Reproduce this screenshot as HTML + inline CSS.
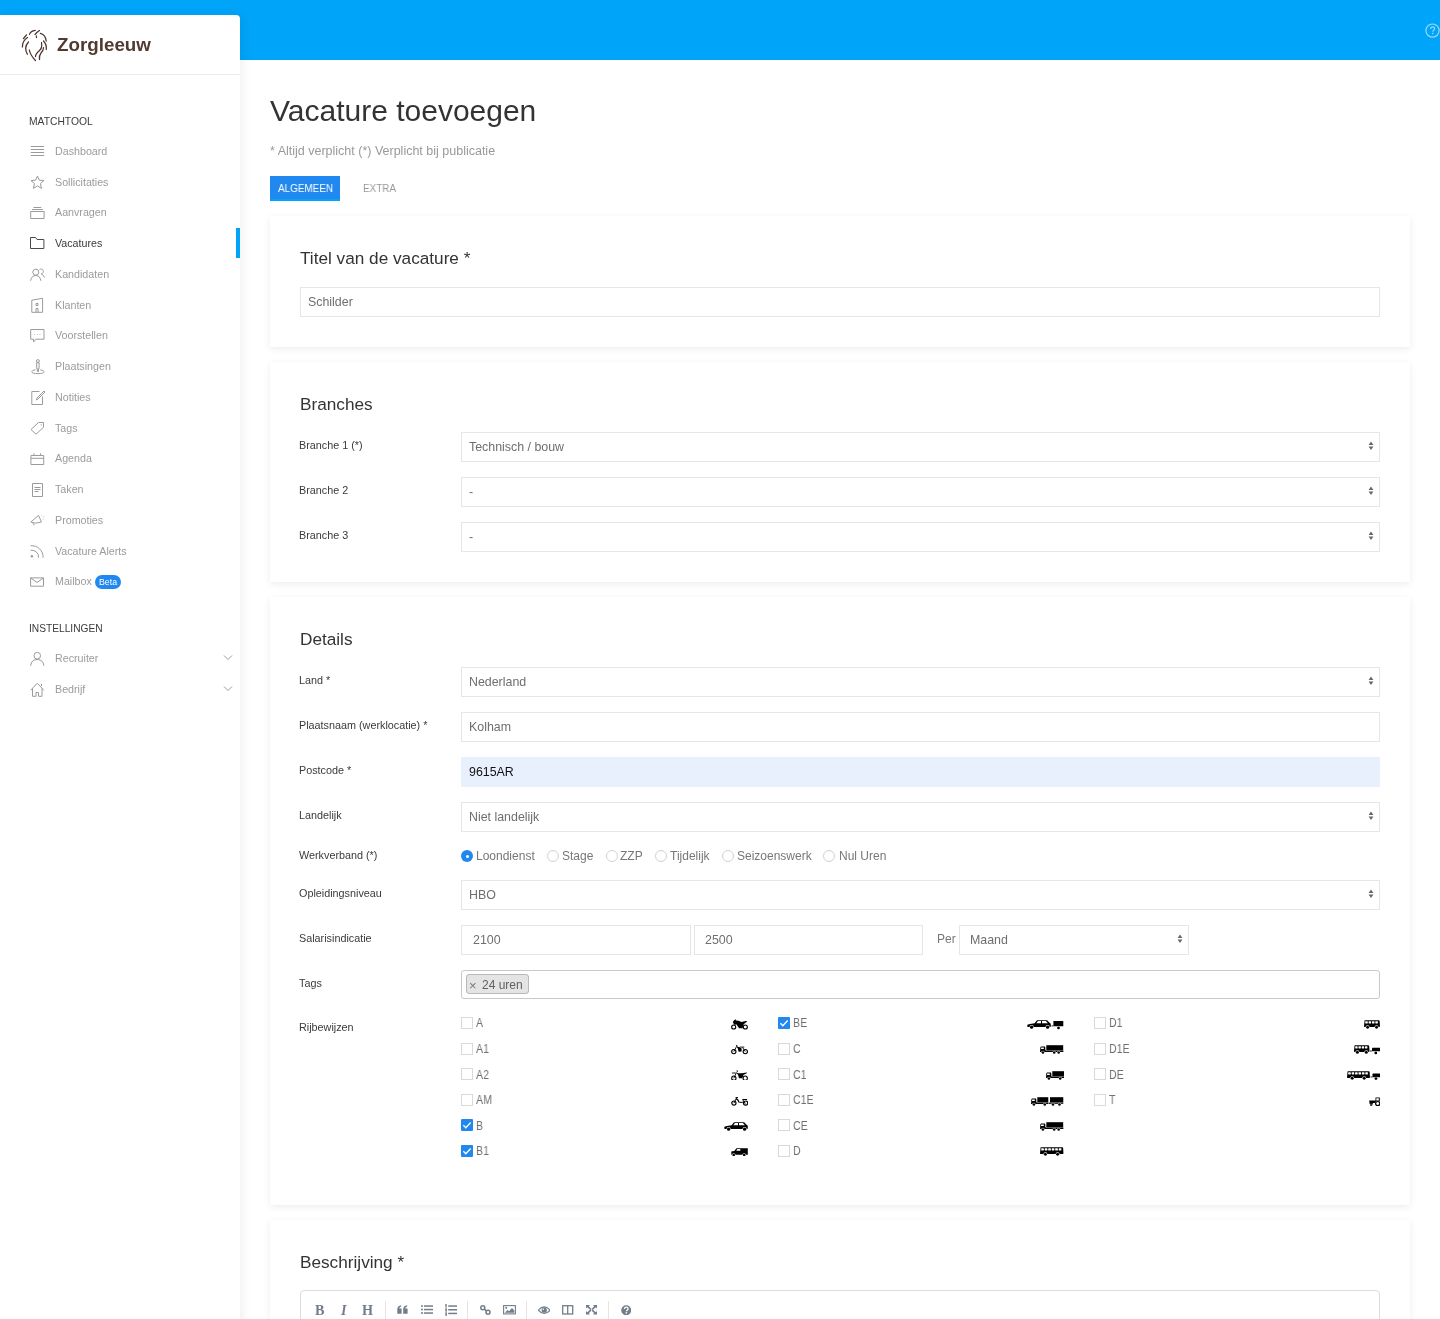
<!DOCTYPE html><html><head><meta charset="utf-8"><title>Vacature toevoegen</title><style>
*{box-sizing:border-box;margin:0;padding:0}
html,body{width:1440px;height:1319px;overflow:hidden;background:#fff;font-family:"Liberation Sans",sans-serif;position:relative}
.t{position:absolute;white-space:nowrap;will-change:transform}
.a{position:absolute}
#topbar{position:absolute;left:0;top:0;width:1440px;height:60px;background:#00a4f9}
#sidebar{position:absolute;left:0;top:15px;width:240px;height:1320px;background:#fff;border-top-right-radius:4px;box-shadow:3px 0 10px rgba(0,0,0,0.06)}
.card{position:absolute;left:270px;width:1140px;background:#fff;box-shadow:0 2px 7px rgba(0,0,0,0.075)}
.inp{position:absolute;background:#fff;border:1px solid #e6e6e6}
.sico{position:absolute;left:30px;overflow:visible}
.sico.act *{stroke:#4a4a4a}
.sico *{fill:none;stroke:#9b9b9b;stroke-width:1}
.cb{position:absolute;width:12px;height:12px;border:1px solid #d9d9d9;background:#fff}
.cbc{position:absolute;width:12px;height:12px;background:#2188f0;border-radius:1px}
.rd{position:absolute;width:12px;height:12px;border:1px solid #d2d2d2;border-radius:50%;background:#fff}
</style></head><body>
<div id="topbar"></div>
<svg class="a" style="left:1418px;top:16px" width="30" height="30" viewBox="0 0 30 30"><circle cx="14.5" cy="14.6" r="6.6" fill="none" stroke="rgba(255,255,255,0.6)" stroke-width="1.2"/><path d="M12.6 12.9c0-1.2.9-2 2-2s2 .8 2 1.9c0 1.4-1.9 1.5-1.9 3" fill="none" stroke="rgba(255,255,255,0.6)" stroke-width="1.1"/><circle cx="14.7" cy="17.6" r=".75" fill="rgba(255,255,255,0.65)"/></svg>
<div id="sidebar"></div>
<svg class="a" style="left:18px;top:26px" width="34" height="38" viewBox="0 0 34 38">
<g fill="none" stroke="#4e342e" stroke-width="1.25" stroke-linecap="round">
<path d="M11.5 8.4Q12.5 5 17.3 4.3"/>
<path d="M17 8.5Q19 6 21.5 4.5"/>
<path d="M18.4 10L18.5 11.5"/>
<path d="M22.3 7.3Q27.5 8.5 28.2 15"/>
<path d="M5.5 12.5L8.5 8.8"/>
<path d="M9.5 11.5Q4.2 15 4.4 21"/>
<path d="M10.5 16Q5.5 21.5 9.4 28.3"/>
<path d="M11.3 24Q12 28.5 17.4 34.5"/>
<path d="M23.5 16.5Q24.5 22 21.5 24.5Q17.5 28 17.5 30.5"/>
<path d="M25.5 15Q28.8 18.5 28.3 23.5"/>
<path d="M25.5 21.7Q25.3 25 23 27Q21 29.5 21.5 33.5"/>
</g></svg>
<div class="t" style="left:57px;top:36.09px;font-size:18.8px;line-height:18.8px;color:#513a2f;font-weight:700;">Zorgleeuw</div>
<div class="a" style="left:0;top:74px;width:240px;height:1px;background:#e9e9e9"></div>
<div class="t" style="left:29px;top:116.88px;font-size:10.3px;line-height:10.3px;color:#3c3c3c;font-weight:400;">MATCHTOOL</div>
<svg class="sico" style="top:141px" width="16" height="19" viewBox="0 0 16 19"><path d="M0.7 5.5H14.1M0.7 8.5H14.1M0.7 11.5H14.1M0.7 14.5H14.1"/></svg>
<div class="t" style="left:55px;top:145.94px;font-size:10.7px;line-height:10.7px;color:#9b9b9b;font-weight:400;">Dashboard</div>
<svg class="sico" style="top:172px" width="16" height="19" viewBox="0 0 16 19"><path d="M7.45 4.1L9.3 8.2L13.9 8.6L10.4 11.5L11.5 16.4L7.45 13.9L3.4 16.4L4.5 11.5L1 8.6L5.6 8.2Z"/></svg>
<div class="t" style="left:55px;top:176.69px;font-size:10.7px;line-height:10.7px;color:#9b9b9b;font-weight:400;">Sollicitaties</div>
<svg class="sico" style="top:203px" width="16" height="19" viewBox="0 0 16 19"><path d="M0.7 8.5H14.1V15.5H0.7ZM2 6.5H12.8M3.5 4.5H11.3"/></svg>
<div class="t" style="left:55px;top:207.44px;font-size:10.7px;line-height:10.7px;color:#9b9b9b;font-weight:400;">Aanvragen</div>
<svg class="sico act" style="top:233px" width="16" height="19" viewBox="0 0 16 19"><path d="M0.5 4.5H5.5L7 6.5H13.9V15.5H0.5Z"/></svg>
<div class="t" style="left:55px;top:238.19px;font-size:10.7px;line-height:10.7px;color:#3a3a3a;font-weight:400;">Vacatures</div>
<svg class="sico" style="top:264px" width="16" height="19" viewBox="0 0 16 19"><path d="M0.6 16.8Q1.5 11.5 5.8 11.5Q10 11.5 10.9 16.8M5.8 11.2A3 3 0 1 0 5.8 5.2A3 3 0 0 0 5.8 11.2M9.5 5.5A2.4 2.4 0 1 1 11.2 9.8Q13.6 10.8 14.6 13.5"/></svg>
<div class="t" style="left:55px;top:268.94px;font-size:10.7px;line-height:10.7px;color:#9b9b9b;font-weight:400;">Kandidaten</div>
<svg class="sico" style="top:295px" width="16" height="19" viewBox="0 0 16 19"><path d="M1.8 17.3V5.2L12.6 3.3V17.3ZM6 8.5H8V10.5H6ZM6 17.3V13.5H8V17.3"/></svg>
<div class="t" style="left:55px;top:299.69px;font-size:10.7px;line-height:10.7px;color:#9b9b9b;font-weight:400;">Klanten</div>
<svg class="sico" style="top:326px" width="16" height="19" viewBox="0 0 16 19"><path d="M0.7 3.5H14V13.2H6L3.5 16V13.2H0.7Z"/><path d="M4.5 8.5h.6M7.1 8.5h.6M9.7 8.5h.6" stroke-width="1.2"/></svg>
<div class="t" style="left:55px;top:330.44px;font-size:10.7px;line-height:10.7px;color:#9b9b9b;font-weight:400;">Voorstellen</div>
<svg class="sico" style="top:356px" width="16" height="19" viewBox="0 0 16 19"><path d="M6.7 6.7H9.1V12.5H8.5V15.5H7.3V12.5H6.7ZM7.9 3.6A1.45 1.45 0 1 1 7.9 6.5A1.45 1.45 0 0 1 7.9 3.6ZM5.5 13.8Q1.8 14.3 1.8 15.7Q1.8 17.6 7.9 17.6Q14 17.6 14 15.7Q14 14.3 10.3 13.8"/></svg>
<div class="t" style="left:55px;top:361.19px;font-size:10.7px;line-height:10.7px;color:#9b9b9b;font-weight:400;">Plaatsingen</div>
<svg class="sico" style="top:387px" width="16" height="19" viewBox="0 0 16 19"><path d="M9.5 4.5H1.8V17.5H12.5V9.5"/><path d="M6.5 13L7 11L14 4L15 5L8 12Z"/></svg>
<div class="t" style="left:55px;top:391.94px;font-size:10.7px;line-height:10.7px;color:#9b9b9b;font-weight:400;">Notities</div>
<svg class="sico" style="top:418px" width="16" height="19" viewBox="0 0 16 19"><path d="M1 11.5L8.5 4.5H13.5V9.3L6 16.2Z"/><circle cx="11.2" cy="6.9" r=".6" style="fill:#9b9b9b;stroke:none"/></svg>
<div class="t" style="left:55px;top:422.69px;font-size:10.7px;line-height:10.7px;color:#9b9b9b;font-weight:400;">Tags</div>
<svg class="sico" style="top:449px" width="16" height="19" viewBox="0 0 16 19"><path d="M0.9 6.5H13.7V15.5H0.9ZM0.9 9.3H13.7M4 4.3V6.5M10.6 4.3V6.5"/></svg>
<div class="t" style="left:55px;top:453.44px;font-size:10.7px;line-height:10.7px;color:#9b9b9b;font-weight:400;">Agenda</div>
<svg class="sico" style="top:479px" width="16" height="19" viewBox="0 0 16 19"><path d="M2.5 4.5H12.5V17.5H2.5ZM4.5 8.5H10.5M4.5 10.5H10.5M4.5 12.5H8.5"/></svg>
<div class="t" style="left:55px;top:484.19px;font-size:10.7px;line-height:10.7px;color:#9b9b9b;font-weight:400;">Taken</div>
<svg class="sico" style="top:510px" width="16" height="19" viewBox="0 0 16 19"><path d="M0.8 12L8.5 5.4L11.5 12L5.5 13.2Z"/><path d="M3 13.2L4.2 15.3" stroke-width="1.6"/><path d="M11.6 5.2l.5.4M13.7 6.6l.6.2M13.2 8.8l.1.6" stroke-width="1.1"/></svg>
<div class="t" style="left:55px;top:514.94px;font-size:10.7px;line-height:10.7px;color:#9b9b9b;font-weight:400;">Promoties</div>
<svg class="sico" style="top:541px" width="16" height="19" viewBox="0 0 16 19"><path d="M0.6 9.3A6.8 6.8 0 0 1 8.6 16.5M0.6 4.8A11.3 11.3 0 0 1 13.1 16.7"/><circle cx="1.9" cy="15.3" r="1.2" style="fill:#9b9b9b;stroke:none"/></svg>
<div class="t" style="left:55px;top:545.69px;font-size:10.7px;line-height:10.7px;color:#9b9b9b;font-weight:400;">Vacature Alerts</div>
<svg class="sico" style="top:572px" width="16" height="19" viewBox="0 0 16 19"><path d="M0.6 5.9H13.5V14.2H0.6ZM0.6 5.9L7 10.5L13.5 5.9"/></svg>
<div class="t" style="left:55px;top:576.44px;font-size:10.7px;line-height:10.7px;color:#9b9b9b;font-weight:400;">Mailbox</div>
<div class="a" style="left:236px;top:228px;width:4px;height:30px;background:#00a4f9"></div>
<div class="a" style="left:95px;top:575px;width:26px;height:14px;border-radius:7px;background:#2188f0"></div>
<div class="t" style="left:99px;top:577.95px;font-size:8.8px;line-height:8.8px;color:#fff;font-weight:400;">Beta</div>
<div class="t" style="left:29px;top:623.97px;font-size:10.2px;line-height:10.2px;color:#3c3c3c;font-weight:400;">INSTELLINGEN</div>
<svg class="sico" style="top:648px" width="16" height="19" viewBox="0 0 16 19"><path d="M0.6 17.8Q1.3 11.5 7.25 11.5Q13.2 11.5 13.9 17.8M7.25 11A3.3 3.3 0 1 0 7.25 4.4A3.3 3.3 0 0 0 7.25 11"/></svg>
<div class="t" style="left:55px;top:653.34px;font-size:10.7px;line-height:10.7px;color:#9b9b9b;font-weight:400;">Recruiter</div>
<svg class="a" style="left:223px;top:655.40px" width="10" height="6" viewBox="0 0 10 6"><path d="M1 .5l4 4 4-4" fill="none" stroke="#9b9b9b" stroke-width="1"/></svg>
<svg class="sico" style="top:679px" width="16" height="19" viewBox="0 0 16 19"><path d="M0.6 11.3L7.25 4.2L13.9 11.3M2.5 9.5V17.3H6V13.5H8.5V17.3H12V9.5M11.5 4.8V7"/></svg>
<div class="t" style="left:55px;top:684.09px;font-size:10.7px;line-height:10.7px;color:#9b9b9b;font-weight:400;">Bedrijf</div>
<svg class="a" style="left:223px;top:686.15px" width="10" height="6" viewBox="0 0 10 6"><path d="M1 .5l4 4 4-4" fill="none" stroke="#9b9b9b" stroke-width="1"/></svg>
<div class="t" style="left:270px;top:96.11px;font-size:30px;line-height:30px;color:#333;font-weight:400;">Vacature toevoegen</div>
<div class="t" style="left:270px;top:145.22px;font-size:12.5px;line-height:12.5px;color:#999;font-weight:400;">* Altijd verplicht (*) Verplicht bij publicatie</div>
<div class="a" style="left:270px;top:175.5px;width:70px;height:25.5px;background:#2188f0;border-bottom:2px solid #00a4f9"></div>
<div class="t" style="left:278px;top:182.63px;font-size:10.6px;line-height:10.6px;color:#fff;font-weight:400;transform:scaleX(0.935);transform-origin:0 0">ALGEMEEN</div>
<div class="t" style="left:363px;top:183.23px;font-size:10.6px;line-height:10.6px;color:#999;font-weight:400;transform:scaleX(0.935);transform-origin:0 0">EXTRA</div>
<div class="card" style="top:216px;height:131px"></div>
<div class="card" style="top:362px;height:220px"></div>
<div class="card" style="top:597px;height:608px"></div>
<div class="card" style="top:1220px;height:200px"></div>
<div class="t" style="left:300px;top:250.44px;font-size:17.2px;line-height:17.2px;color:#333;font-weight:400;">Titel van de vacature *</div>
<div class="inp" style="left:300px;top:287px;width:1080px;height:30px;background:#fff;border-color:#e6e6e6;border-radius:0px"></div>
<div class="t" style="left:308px;top:296.30px;font-size:12.4px;line-height:12.4px;color:#6e6e6e;font-weight:400;">Schilder</div>
<div class="t" style="left:300px;top:395.84px;font-size:17.2px;line-height:17.2px;color:#333;font-weight:400;">Branches</div>
<div class="t" style="left:299px;top:440.36px;font-size:10.8px;line-height:10.8px;color:#3a3a3a;font-weight:400;">Branche 1 (*)</div>
<div class="inp" style="left:461px;top:432px;width:919px;height:30px;background:#fff;border-color:#e6e6e6;border-radius:0px"></div>
<div class="t" style="left:469px;top:441.30px;font-size:12.4px;line-height:12.4px;color:#6e6e6e;font-weight:400;">Technisch / bouw</div>
<svg class="a" style="left:1367.5px;top:441px" width="6" height="10" viewBox="0 0 6 10"><path d="M3 .5L5.4 4H.6zM.6 5.4h4.8L3 9z" fill="#666"/></svg>
<div class="t" style="left:299px;top:485.36px;font-size:10.8px;line-height:10.8px;color:#3a3a3a;font-weight:400;">Branche 2</div>
<div class="inp" style="left:461px;top:477px;width:919px;height:30px;background:#fff;border-color:#e6e6e6;border-radius:0px"></div>
<div class="t" style="left:469px;top:486.30px;font-size:12.4px;line-height:12.4px;color:#6e6e6e;font-weight:400;">-</div>
<svg class="a" style="left:1367.5px;top:486px" width="6" height="10" viewBox="0 0 6 10"><path d="M3 .5L5.4 4H.6zM.6 5.4h4.8L3 9z" fill="#666"/></svg>
<div class="t" style="left:299px;top:530.36px;font-size:10.8px;line-height:10.8px;color:#3a3a3a;font-weight:400;">Branche 3</div>
<div class="inp" style="left:461px;top:522px;width:919px;height:30px;background:#fff;border-color:#e6e6e6;border-radius:0px"></div>
<div class="t" style="left:469px;top:531.30px;font-size:12.4px;line-height:12.4px;color:#6e6e6e;font-weight:400;">-</div>
<svg class="a" style="left:1367.5px;top:531px" width="6" height="10" viewBox="0 0 6 10"><path d="M3 .5L5.4 4H.6zM.6 5.4h4.8L3 9z" fill="#666"/></svg>
<div class="t" style="left:300px;top:631.14px;font-size:17.2px;line-height:17.2px;color:#333;font-weight:400;">Details</div>
<div class="t" style="left:299px;top:675.06px;font-size:10.8px;line-height:10.8px;color:#3a3a3a;font-weight:400;">Land *</div>
<div class="inp" style="left:461px;top:667px;width:919px;height:30px;background:#fff;border-color:#e6e6e6;border-radius:0px"></div>
<div class="t" style="left:469px;top:676.30px;font-size:12.4px;line-height:12.4px;color:#6e6e6e;font-weight:400;">Nederland</div>
<svg class="a" style="left:1367.5px;top:676px" width="6" height="10" viewBox="0 0 6 10"><path d="M3 .5L5.4 4H.6zM.6 5.4h4.8L3 9z" fill="#666"/></svg>
<div class="t" style="left:299px;top:720.06px;font-size:10.8px;line-height:10.8px;color:#3a3a3a;font-weight:400;">Plaatsnaam (werklocatie) *</div>
<div class="inp" style="left:461px;top:712px;width:919px;height:30px;background:#fff;border-color:#e6e6e6;border-radius:0px"></div>
<div class="t" style="left:469px;top:721.30px;font-size:12.4px;line-height:12.4px;color:#6e6e6e;font-weight:400;">Kolham</div>
<div class="t" style="left:299px;top:765.06px;font-size:10.8px;line-height:10.8px;color:#3a3a3a;font-weight:400;">Postcode *</div>
<div class="inp" style="left:461px;top:757px;width:919px;height:30px;background:#e8f0fe;border-color:#e8f0fe;border-radius:0px"></div>
<div class="t" style="left:469px;top:766.30px;font-size:12.4px;line-height:12.4px;color:#111;font-weight:400;">9615AR</div>
<div class="t" style="left:299px;top:810.06px;font-size:10.8px;line-height:10.8px;color:#3a3a3a;font-weight:400;">Landelijk</div>
<div class="inp" style="left:461px;top:802px;width:919px;height:30px;background:#fff;border-color:#e6e6e6;border-radius:0px"></div>
<div class="t" style="left:469px;top:811.30px;font-size:12.4px;line-height:12.4px;color:#6e6e6e;font-weight:400;">Niet landelijk</div>
<svg class="a" style="left:1367.5px;top:811px" width="6" height="10" viewBox="0 0 6 10"><path d="M3 .5L5.4 4H.6zM.6 5.4h4.8L3 9z" fill="#666"/></svg>
<div class="t" style="left:299px;top:849.61px;font-size:10.8px;line-height:10.8px;color:#3a3a3a;font-weight:400;">Werkverband (*)</div>
<div class="a" style="left:461px;top:850px;width:12px;height:12px;border-radius:50%;background:#2188f0"></div>
<div class="a" style="left:465.5px;top:854.5px;width:3px;height:3px;border-radius:50%;background:#fff"></div>
<div class="t" style="left:476px;top:850.24px;font-size:12px;line-height:12px;color:#777;font-weight:400;">Loondienst</div>
<div class="rd" style="left:547px;top:850px"></div>
<div class="t" style="left:562px;top:850.24px;font-size:12px;line-height:12px;color:#777;font-weight:400;">Stage</div>
<div class="rd" style="left:605.7px;top:850px"></div>
<div class="t" style="left:620px;top:850.24px;font-size:12px;line-height:12px;color:#777;font-weight:400;">ZZP</div>
<div class="rd" style="left:654.5px;top:850px"></div>
<div class="t" style="left:670px;top:850.24px;font-size:12px;line-height:12px;color:#777;font-weight:400;">Tijdelijk</div>
<div class="rd" style="left:722.2px;top:850px"></div>
<div class="t" style="left:737px;top:850.24px;font-size:12px;line-height:12px;color:#777;font-weight:400;">Seizoenswerk</div>
<div class="rd" style="left:823.3px;top:850px"></div>
<div class="t" style="left:839px;top:850.24px;font-size:12px;line-height:12px;color:#777;font-weight:400;">Nul Uren</div>
<div class="t" style="left:299px;top:887.56px;font-size:10.8px;line-height:10.8px;color:#3a3a3a;font-weight:400;">Opleidingsniveau</div>
<div class="inp" style="left:461px;top:880px;width:919px;height:30px;background:#fff;border-color:#e6e6e6;border-radius:0px"></div>
<div class="t" style="left:469px;top:889.30px;font-size:12.4px;line-height:12.4px;color:#6e6e6e;font-weight:400;">HBO</div>
<svg class="a" style="left:1367.5px;top:889px" width="6" height="10" viewBox="0 0 6 10"><path d="M3 .5L5.4 4H.6zM.6 5.4h4.8L3 9z" fill="#666"/></svg>
<div class="t" style="left:299px;top:932.86px;font-size:10.8px;line-height:10.8px;color:#3a3a3a;font-weight:400;">Salarisindicatie</div>
<div class="inp" style="left:461px;top:925px;width:230px;height:30px;background:#fff;border-color:#e6e6e6;border-radius:0px"></div>
<div class="t" style="left:473px;top:934.30px;font-size:12.4px;line-height:12.4px;color:#6e6e6e;font-weight:400;">2100</div>
<div class="inp" style="left:694px;top:925px;width:229px;height:30px;background:#fff;border-color:#e6e6e6;border-radius:0px"></div>
<div class="t" style="left:705px;top:934.30px;font-size:12.4px;line-height:12.4px;color:#6e6e6e;font-weight:400;">2500</div>
<div class="t" style="left:937px;top:932.84px;font-size:12px;line-height:12px;color:#777;font-weight:400;">Per</div>
<div class="inp" style="left:959px;top:925px;width:230px;height:30px;background:#fff;border-color:#e6e6e6;border-radius:0px"></div>
<div class="t" style="left:970px;top:934.30px;font-size:12.4px;line-height:12.4px;color:#6e6e6e;font-weight:400;">Maand</div>
<svg class="a" style="left:1176.5px;top:934px" width="6" height="10" viewBox="0 0 6 10"><path d="M3 .5L5.4 4H.6zM.6 5.4h4.8L3 9z" fill="#666"/></svg>
<div class="t" style="left:299px;top:977.56px;font-size:10.8px;line-height:10.8px;color:#3a3a3a;font-weight:400;">Tags</div>
<div class="inp" style="left:461px;top:970px;width:919px;height:29px;background:#fff;border-color:#c9c9c9;border-radius:3px"></div>
<div class="a" style="left:466px;top:974px;width:63px;height:20px;background:#e4e4e4;border:1px solid #b9b9b9;border-radius:3px"></div>
<div class="t" style="left:469px;top:978.60px;font-size:13px;line-height:13px;color:#777;font-weight:400;">×</div>
<div class="t" style="left:482px;top:979.34px;font-size:12px;line-height:12px;color:#606060;font-weight:400;">24 uren</div>
<div class="t" style="left:299px;top:1021.86px;font-size:10.8px;line-height:10.8px;color:#3a3a3a;font-weight:400;">Rijbewijzen</div>
<div class="cb" style="left:461.2px;top:1017.3px"></div>
<div class="t" style="left:476px;top:1017.47px;font-size:12.2px;line-height:12.2px;color:#707070;font-weight:400;transform:scaleX(0.87);transform-origin:0 0">A</div>
<svg class="a" style="left:731.0px;top:1019.3px" width="17" height="11" viewBox="0 0 17 11"><circle cx="2.7" cy="8" r="2.05" fill="none" stroke="#000" stroke-width="1.1"/><circle cx="14.3" cy="8" r="2.05" fill="none" stroke="#000" stroke-width="1.1"/><path d="M1.8 3Q3 0.9 4.6 0.2L5 1.5L7.5 1.8L10.5 3L12.5 2.4Q15 1.8 16.4 2.4L13.8 4.3L12.6 5.6L11.6 9.2H8L5.6 5.6L3.2 5.8Z" fill="#000"/></svg>
<div class="cb" style="left:461.2px;top:1042.8px"></div>
<div class="t" style="left:476px;top:1042.99px;font-size:12.2px;line-height:12.2px;color:#707070;font-weight:400;transform:scaleX(0.87);transform-origin:0 0">A1</div>
<svg class="a" style="left:731.0px;top:1045.1px" width="17" height="10" viewBox="0 0 17 10"><circle cx="2.8" cy="6.6" r="2.15" fill="none" stroke="#000" stroke-width="1.1"/><circle cx="14.3" cy="6.6" r="2.15" fill="none" stroke="#000" stroke-width="1.1"/><path d="M2.8 6.6L5.6 1.4M5 0.4L6.6 1M8.8 2.1H13.3M11.6 2.5L14.3 6.6" stroke="#000" stroke-width="0.9" fill="none"/><path d="M5.2 1.2L8.6 2.2L10.6 3.4L10.6 6.6L7.6 6.8L6.8 3.5Z" fill="#000"/></svg>
<div class="cb" style="left:461.2px;top:1068.3px"></div>
<div class="t" style="left:476px;top:1068.51px;font-size:12.2px;line-height:12.2px;color:#707070;font-weight:400;transform:scaleX(0.87);transform-origin:0 0">A2</div>
<svg class="a" style="left:731.0px;top:1070.0px" width="17" height="10" viewBox="0 0 17 10"><circle cx="2.85" cy="8.2" r="2.15" fill="none" stroke="#000" stroke-width="1.1"/><circle cx="14.2" cy="8.2" r="2.15" fill="none" stroke="#000" stroke-width="1.1"/><path d="M1 3H4.8M2.85 8.2L5.5 2.5M6 0.3L6.5 2" stroke="#000" stroke-width="0.9" fill="none"/><path d="M5.2 2.6L7.5 3.2L11 3.2L15.6 2.6Q16.3 2.7 15.8 3.3L12.6 4.8L11.3 8.2H8L7 4.8Z" fill="#000"/></svg>
<div class="cb" style="left:461.2px;top:1093.9px"></div>
<div class="t" style="left:476px;top:1094.03px;font-size:12.2px;line-height:12.2px;color:#707070;font-weight:400;transform:scaleX(0.87);transform-origin:0 0">AM</div>
<svg class="a" style="left:731.0px;top:1096.6px" width="17" height="10" viewBox="0 0 17 10"><circle cx="2.9" cy="6.1" r="2.1" fill="none" stroke="#000" stroke-width="1.2"/><circle cx="14.6" cy="6.1" r="2.1" fill="none" stroke="#000" stroke-width="1.2"/><path d="M2.9 6.1L5.6 0.8M4.6 0.5L7 0.7M8.4 5.3H11.5L14.6 6.1" stroke="#000" stroke-width="1" fill="none"/><path d="M5.2 1.3Q7.8 1.8 8.5 5.6L7.3 5.6Q6.8 3.2 5 2.6Z" fill="#000"/><path d="M11 2.1H16.2Q16.4 2.9 15.5 3H11.6Z" fill="#000"/><path d="M12 3L13.2 5.8" stroke="#000" stroke-width="0.9"/></svg>
<div class="cbc" style="left:461.2px;top:1119.4px"><svg width="12" height="12" viewBox="0 0 12 12" style="position:absolute;left:0;top:0"><path d="M2.4 6.3l2.4 2.4 4.9-5.2" fill="none" stroke="#fff" stroke-width="1.3"/></svg></div>
<div class="t" style="left:476px;top:1119.55px;font-size:12.2px;line-height:12.2px;color:#707070;font-weight:400;transform:scaleX(0.87);transform-origin:0 0">B</div>
<svg class="a" style="left:724.0px;top:1121.7px" width="24" height="9" viewBox="0 0 24 9"><g transform="translate(0 0)"><path d="M0.3 5.3C0.3 4.5 1.5 4.2 3 4L7.6 3.3L9.8 0.6Q10.1 0.2 10.6 0.2L19.6 0.2Q20.1 0.2 20.5 0.6L22.2 2.4Q23.8 3 23.8 4.5L23.8 6.3Q23.8 6.9 23 6.9L1 6.9Q0.3 6.9 0.3 6.3Z" fill="#000"/><path d="M9.3 3.2L11 1.1L14 1.1L14 3.2ZM15 3.2L15 1.1L18.9 1.1L20.9 3.2Z" fill="#fff"/><circle cx="4.6" cy="7.2" r="2.1" fill="#fff"/><circle cx="4.6" cy="7.2" r="1.6" fill="#000"/><circle cx="20.6" cy="7.2" r="2.1" fill="#fff"/><circle cx="20.6" cy="7.2" r="1.6" fill="#000"/></g></svg>
<div class="cbc" style="left:461.2px;top:1144.9px"><svg width="12" height="12" viewBox="0 0 12 12" style="position:absolute;left:0;top:0"><path d="M2.4 6.3l2.4 2.4 4.9-5.2" fill="none" stroke="#fff" stroke-width="1.3"/></svg></div>
<div class="t" style="left:476px;top:1145.07px;font-size:12.2px;line-height:12.2px;color:#707070;font-weight:400;transform:scaleX(0.87);transform-origin:0 0">B1</div>
<svg class="a" style="left:731.0px;top:1147.5px" width="17" height="8.5" viewBox="0 0 17 8.5"><path d="M0.3 6.8V4Q0.3 3.4 1 3.3L3.3 3L5.2 0.5Q5.5 0.2 6 0.2H16.5Q16.8 0.2 16.8 0.6V6.5Q16.8 6.8 16.5 6.8Z" fill="#000"/><path d="M5.2 2.8L6.3 1.1H9.3V2.8Z" fill="#fff"/><circle cx="2.7" cy="7" r="1.8" fill="#fff"/><circle cx="2.7" cy="7" r="1.3" fill="#000"/><circle cx="13.2" cy="7" r="1.8" fill="#fff"/><circle cx="13.2" cy="7" r="1.3" fill="#000"/></svg>
<div class="cbc" style="left:778.0px;top:1017.3px"><svg width="12" height="12" viewBox="0 0 12 12" style="position:absolute;left:0;top:0"><path d="M2.4 6.3l2.4 2.4 4.9-5.2" fill="none" stroke="#fff" stroke-width="1.3"/></svg></div>
<div class="t" style="left:793px;top:1017.47px;font-size:12.2px;line-height:12.2px;color:#707070;font-weight:400;transform:scaleX(0.87);transform-origin:0 0">BE</div>
<svg class="a" style="left:1027.3px;top:1020.1px" width="36.5" height="9.5" viewBox="0 0 36.5 9.5"><g transform="translate(0 0)"><path d="M0.3 5.3C0.3 4.5 1.5 4.2 3 4L7.6 3.3L9.8 0.6Q10.1 0.2 10.6 0.2L19.6 0.2Q20.1 0.2 20.5 0.6L22.2 2.4Q23.8 3 23.8 4.5L23.8 6.3Q23.8 6.9 23 6.9L1 6.9Q0.3 6.9 0.3 6.3Z" fill="#000"/><path d="M9.3 3.2L11 1.1L14 1.1L14 3.2ZM15 3.2L15 1.1L18.9 1.1L20.9 3.2Z" fill="#fff"/><circle cx="4.6" cy="7.2" r="2.1" fill="#fff"/><circle cx="4.6" cy="7.2" r="1.6" fill="#000"/><circle cx="20.6" cy="7.2" r="2.1" fill="#fff"/><circle cx="20.6" cy="7.2" r="1.6" fill="#000"/></g><path d="M24.4 5.9h2" stroke="#000" stroke-width="0.8"/><rect x="26.4" y="0.9" width="9.899999999999999" height="5.3" rx="0.5" fill="#000"/><circle cx="31.5" cy="7.9" r="1.9" fill="#fff"/><circle cx="31.5" cy="7.9" r="1.4" fill="#000"/></svg>
<div class="cb" style="left:778.0px;top:1042.8px"></div>
<div class="t" style="left:793px;top:1042.99px;font-size:12.2px;line-height:12.2px;color:#707070;font-weight:400;transform:scaleX(0.87);transform-origin:0 0">C</div>
<svg class="a" style="left:1040.3px;top:1045.3px" width="23.5" height="9.2" viewBox="0 0 23.5 9.2"><g transform="translate(0 0)"><path d="M0.2 7V3.6Q0.2 2 1 1.6L4.8 1.6L5.3 2.2L5.3 5.6L5.8 5.6L5.8 7Z" fill="#000"/><path d="M1.2 2.5L3.8 2.5L3.8 4L1 4Z" fill="#fff"/><rect x="6.3" y="0.2" width="16.9" height="5.2" fill="#000"/><rect x="0.2" y="5.6" width="23.2" height="1.4" fill="#000"/><circle cx="2.9" cy="7.5" r="1.75" fill="#fff"/><circle cx="2.9" cy="7.5" r="1.3" fill="#000"/><circle cx="14.2" cy="7.5" r="1.75" fill="#fff"/><circle cx="14.2" cy="7.5" r="1.3" fill="#000"/><circle cx="18.7" cy="7.5" r="1.75" fill="#fff"/><circle cx="18.7" cy="7.5" r="1.3" fill="#000"/></g></svg>
<div class="cb" style="left:778.0px;top:1068.3px"></div>
<div class="t" style="left:793px;top:1068.51px;font-size:12.2px;line-height:12.2px;color:#707070;font-weight:400;transform:scaleX(0.87);transform-origin:0 0">C1</div>
<svg class="a" style="left:1045.6px;top:1071.0px" width="18.2" height="9.2" viewBox="0 0 18.2 9.2"><g transform="translate(0 0)"><path d="M0.2 7V3.6Q0.2 2 1 1.6L4.8 1.6L5.3 2.2L5.3 5.6L5.8 5.6L5.8 7Z" fill="#000"/><path d="M1.2 2.5L3.8 2.5L3.8 4L1 4Z" fill="#fff"/><rect x="6.3" y="0.2" width="11.7" height="5.2" fill="#000"/><rect x="0.2" y="5.6" width="18.0" height="1.4" fill="#000"/><circle cx="2.9" cy="7.5" r="1.75" fill="#fff"/><circle cx="2.9" cy="7.5" r="1.3" fill="#000"/><circle cx="14.2" cy="7.5" r="1.75" fill="#fff"/><circle cx="14.2" cy="7.5" r="1.3" fill="#000"/></g></svg>
<div class="cb" style="left:778.0px;top:1093.9px"></div>
<div class="t" style="left:793px;top:1094.03px;font-size:12.2px;line-height:12.2px;color:#707070;font-weight:400;transform:scaleX(0.87);transform-origin:0 0">C1E</div>
<svg class="a" style="left:1031.3px;top:1096.6px" width="32.5" height="9.2" viewBox="0 0 32.5 9.2"><g transform="translate(0 0)"><path d="M0.2 7V3.6Q0.2 2 1 1.6L4.8 1.6L5.3 2.2L5.3 5.6L5.8 5.6L5.8 7Z" fill="#000"/><path d="M1.2 2.5L3.8 2.5L3.8 4L1 4Z" fill="#fff"/><rect x="6.3" y="0.2" width="11" height="5.2" fill="#000"/><rect x="0.2" y="5.6" width="17.3" height="1.4" fill="#000"/><circle cx="2.9" cy="7.5" r="1.75" fill="#fff"/><circle cx="2.9" cy="7.5" r="1.3" fill="#000"/><circle cx="13.8" cy="7.5" r="1.75" fill="#fff"/><circle cx="13.8" cy="7.5" r="1.3" fill="#000"/></g><rect x="19" y="0.2" width="13.3" height="5.2" fill="#000"/><rect x="18" y="5.6" width="14.3" height="1.2" fill="#000"/><circle cx="22" cy="7.5" r="1.75" fill="#fff"/><circle cx="22" cy="7.5" r="1.3" fill="#000"/><circle cx="28.5" cy="7.5" r="1.75" fill="#fff"/><circle cx="28.5" cy="7.5" r="1.3" fill="#000"/></svg>
<div class="cb" style="left:778.0px;top:1119.4px"></div>
<div class="t" style="left:793px;top:1119.55px;font-size:12.2px;line-height:12.2px;color:#707070;font-weight:400;transform:scaleX(0.87);transform-origin:0 0">CE</div>
<svg class="a" style="left:1040.3px;top:1121.9px" width="23.5" height="9.2" viewBox="0 0 23.5 9.2"><g transform="translate(0 0)"><path d="M0.2 7V3.6Q0.2 2 1 1.6L4.8 1.6L5.3 2.2L5.3 5.6L5.8 5.6L5.8 7Z" fill="#000"/><path d="M1.2 2.5L3.8 2.5L3.8 4L1 4Z" fill="#fff"/><rect x="6.3" y="0.2" width="16.9" height="5.2" fill="#000"/><rect x="0.2" y="5.6" width="23.2" height="1.4" fill="#000"/><circle cx="2.9" cy="7.5" r="1.75" fill="#fff"/><circle cx="2.9" cy="7.5" r="1.3" fill="#000"/><circle cx="14.2" cy="7.5" r="1.75" fill="#fff"/><circle cx="14.2" cy="7.5" r="1.3" fill="#000"/><circle cx="18.7" cy="7.5" r="1.75" fill="#fff"/><circle cx="18.7" cy="7.5" r="1.3" fill="#000"/></g></svg>
<div class="cb" style="left:778.0px;top:1144.9px"></div>
<div class="t" style="left:793px;top:1145.07px;font-size:12.2px;line-height:12.2px;color:#707070;font-weight:400;transform:scaleX(0.87);transform-origin:0 0">D</div>
<svg class="a" style="left:1040.2px;top:1147.1px" width="23.6" height="9.2" viewBox="0 0 23.6 9.2"><g transform="translate(0 0)"><path d="M0.8 0.3H22.3Q23.0 0.3 23.2 1.5L23.5 6.2Q23.5 7 22.7 7H0.5Q0 7 0 6.3L0.5 1Q0.6 0.3 0.8 0.3Z" fill="#000"/><rect x="1.20" y="1.3" width="2.70" height="2.1" rx="0.4" fill="#fff"/><rect x="4.70" y="1.3" width="2.70" height="2.1" rx="0.4" fill="#fff"/><rect x="8.20" y="1.3" width="2.70" height="2.1" rx="0.4" fill="#fff"/><rect x="11.70" y="1.3" width="2.70" height="2.1" rx="0.4" fill="#fff"/><rect x="15.20" y="1.3" width="2.70" height="2.1" rx="0.4" fill="#fff"/><rect x="18.70" y="1.3" width="2.70" height="2.1" rx="0.4" fill="#fff"/><circle cx="5.4" cy="7.3" r="2.05" fill="#fff"/><circle cx="5.4" cy="7.3" r="1.5" fill="#000"/><circle cx="17.6" cy="7.3" r="2.05" fill="#fff"/><circle cx="17.6" cy="7.3" r="1.5" fill="#000"/></g></svg>
<div class="cb" style="left:1093.7px;top:1017.3px"></div>
<div class="t" style="left:1109px;top:1017.47px;font-size:12.2px;line-height:12.2px;color:#707070;font-weight:400;transform:scaleX(0.87);transform-origin:0 0">D1</div>
<svg class="a" style="left:1363.8px;top:1020.1px" width="16.2" height="9.2" viewBox="0 0 16.2 9.2"><g transform="translate(0 0)"><path d="M0.8 0.3H14.8Q15.5 0.3 15.7 1.5L16 6.2Q16 7 15.2 7H0.5Q0 7 0 6.3L0.5 1Q0.6 0.3 0.8 0.3Z" fill="#000"/><rect x="1.20" y="1.3" width="2.58" height="2.1" rx="0.4" fill="#fff"/><rect x="4.58" y="1.3" width="2.58" height="2.1" rx="0.4" fill="#fff"/><rect x="7.95" y="1.3" width="2.58" height="2.1" rx="0.4" fill="#fff"/><rect x="11.32" y="1.3" width="2.58" height="2.1" rx="0.4" fill="#fff"/><circle cx="3.6" cy="7.3" r="2.05" fill="#fff"/><circle cx="3.6" cy="7.3" r="1.5" fill="#000"/><circle cx="12.6" cy="7.3" r="2.05" fill="#fff"/><circle cx="12.6" cy="7.3" r="1.5" fill="#000"/></g></svg>
<div class="cb" style="left:1093.7px;top:1042.8px"></div>
<div class="t" style="left:1109px;top:1042.99px;font-size:12.2px;line-height:12.2px;color:#707070;font-weight:400;transform:scaleX(0.87);transform-origin:0 0">D1E</div>
<svg class="a" style="left:1353.5px;top:1045.2px" width="26.5" height="9.5" viewBox="0 0 26.5 9.5"><g transform="translate(0 0)"><path d="M0.8 0.3H14.3Q15.0 0.3 15.2 1.5L15.5 6.2Q15.5 7 14.7 7H0.5Q0 7 0 6.3L0.5 1Q0.6 0.3 0.8 0.3Z" fill="#000"/><rect x="1.20" y="1.3" width="2.45" height="2.1" rx="0.4" fill="#fff"/><rect x="4.45" y="1.3" width="2.45" height="2.1" rx="0.4" fill="#fff"/><rect x="7.70" y="1.3" width="2.45" height="2.1" rx="0.4" fill="#fff"/><rect x="10.95" y="1.3" width="2.45" height="2.1" rx="0.4" fill="#fff"/><circle cx="3.4" cy="7.3" r="2.05" fill="#fff"/><circle cx="3.4" cy="7.3" r="1.5" fill="#000"/><circle cx="12.3" cy="7.3" r="2.05" fill="#fff"/><circle cx="12.3" cy="7.3" r="1.5" fill="#000"/></g><path d="M16 6.0h2" stroke="#000" stroke-width="0.8"/><rect x="18" y="2.8" width="8.3" height="3.5" rx="0.5" fill="#000"/><circle cx="21.8" cy="7.9" r="1.9" fill="#fff"/><circle cx="21.8" cy="7.9" r="1.4" fill="#000"/></svg>
<div class="cb" style="left:1093.7px;top:1068.3px"></div>
<div class="t" style="left:1109px;top:1068.51px;font-size:12.2px;line-height:12.2px;color:#707070;font-weight:400;transform:scaleX(0.87);transform-origin:0 0">DE</div>
<svg class="a" style="left:1346.7px;top:1070.8px" width="33.3" height="9.2" viewBox="0 0 33.3 9.2"><g transform="translate(0 0)"><path d="M0.8 0.3H21.8Q22.5 0.3 22.7 1.5L23 6.2Q23 7 22.2 7H0.5Q0 7 0 6.3L0.5 1Q0.6 0.3 0.8 0.3Z" fill="#000"/><rect x="1.20" y="1.3" width="2.62" height="2.1" rx="0.4" fill="#fff"/><rect x="4.62" y="1.3" width="2.62" height="2.1" rx="0.4" fill="#fff"/><rect x="8.03" y="1.3" width="2.62" height="2.1" rx="0.4" fill="#fff"/><rect x="11.45" y="1.3" width="2.62" height="2.1" rx="0.4" fill="#fff"/><rect x="14.87" y="1.3" width="2.62" height="2.1" rx="0.4" fill="#fff"/><rect x="18.28" y="1.3" width="2.62" height="2.1" rx="0.4" fill="#fff"/><circle cx="5.2" cy="7.3" r="2.05" fill="#fff"/><circle cx="5.2" cy="7.3" r="1.5" fill="#000"/><circle cx="17.2" cy="7.3" r="2.05" fill="#fff"/><circle cx="17.2" cy="7.3" r="1.5" fill="#000"/></g><path d="M23.5 6.0h2" stroke="#000" stroke-width="0.8"/><rect x="25.5" y="2.5" width="7.700000000000003" height="3.8" rx="0.5" fill="#000"/><circle cx="29" cy="7.6" r="1.9" fill="#fff"/><circle cx="29" cy="7.6" r="1.4" fill="#000"/></svg>
<div class="cb" style="left:1093.7px;top:1093.9px"></div>
<div class="t" style="left:1109px;top:1094.03px;font-size:12.2px;line-height:12.2px;color:#707070;font-weight:400;transform:scaleX(0.87);transform-origin:0 0">T</div>
<svg class="a" style="left:1368.7px;top:1096.6px" width="11.3" height="9.3" viewBox="0 0 11.3 9.3"><path d="M0.2 3.6H6.5V0.5H10.8V4.5L6 6H4L3.5 7.5H1.5L0.5 6.5Z" fill="#000"/><rect x="7.3" y="1.3" width="2.5" height="2.2" fill="#fff"/><circle cx="8.7" cy="6.6" r="2.6" fill="#fff"/><circle cx="8.7" cy="6.6" r="2.1" fill="none" stroke="#000" stroke-width="1.2"/><circle cx="2.2" cy="7.8" r="1.3" fill="#444"/></svg>
<div class="t" style="left:300px;top:1254.19px;font-size:17.2px;line-height:17.2px;color:#333;font-weight:400;">Beschrijving *</div>
<div class="a" style="left:300px;top:1290px;width:1080px;height:60px;border:1px solid #dcdcdc;border-radius:4px;background:#fff"></div>
<div class="t" style="left:315px;top:1302.58px;font-size:14.2px;line-height:14.2px;color:#737d89;font-weight:700;font-family:'Liberation Serif',serif">B</div>
<div class="t" style="left:341px;top:1302.58px;font-size:14.2px;line-height:14.2px;color:#737d89;font-weight:700;font-family:'Liberation Serif',serif;font-style:italic">I</div>
<div class="t" style="left:362px;top:1302.58px;font-size:14.2px;line-height:14.2px;color:#737d89;font-weight:700;font-family:'Liberation Serif',serif">H</div>
<div class="a" style="left:385px;top:1301px;width:1px;height:20px;background:#e4e4e4"></div>
<div class="a" style="left:467px;top:1301px;width:1px;height:20px;background:#e4e4e4"></div>
<div class="a" style="left:526px;top:1301px;width:1px;height:20px;background:#e4e4e4"></div>
<div class="a" style="left:608px;top:1301px;width:1px;height:20px;background:#e4e4e4"></div>
<svg class="a" style="left:397px;top:1305px" width="11" height="9" viewBox="0 0 11 9"><g fill="#737d89"><path d="M0.3 4.3Q0.3 0.6 4.2 0.2V1.6Q2.5 1.9 2.2 3.6H4.6V8.8H0.3Z"/><path d="M6.2 4.3Q6.2 0.6 10.2 0.2V1.6Q8.4 1.9 8.2 3.6H10.6V8.8H6.2Z"/></g></svg>
<svg class="a" style="left:421px;top:1305px" width="12" height="9" viewBox="0 0 12 9"><g fill="#737d89"><circle cx="1" cy="1" r="1"/><circle cx="1" cy="4.5" r="1"/><circle cx="1" cy="8" r="1"/><rect x="3" y="0.3" width="9" height="1.5"/><rect x="3" y="3.8" width="9" height="1.5"/><rect x="3" y="7.3" width="9" height="1.5"/></g></svg>
<svg class="a" style="left:445px;top:1304px" width="12" height="12" viewBox="0 0 12 12"><g fill="#737d89"><rect x="3.2" y="1.3" width="8.8" height="1.5"/><rect x="3.2" y="5" width="8.8" height="1.5"/><rect x="3.2" y="8.7" width="8.8" height="1.5"/><rect x="0.3" y="0" width="1.4" height="3.5"/><rect x="0.3" y="4.2" width="1.6" height="3.4"/><rect x="0.3" y="8.3" width="1.6" height="3.5"/></g></svg>
<svg class="a" style="left:480px;top:1304.5px" width="11" height="10" viewBox="0 0 11 10"><g fill="none" stroke="#737d89" stroke-width="1.5"><circle cx="2.8" cy="2.8" r="2"/><circle cx="8" cy="7.2" r="2"/><path d="M4.2 4.2L6.6 5.8"/></g></svg>
<svg class="a" style="left:502.5px;top:1305px" width="13" height="9.5" viewBox="0 0 13 9.5"><rect x="0.6" y="0.6" width="11.8" height="8.3" fill="none" stroke="#737d89" stroke-width="1.1"/><path d="M1.8 7.8L4.5 5L6 6.3L9 3L11.3 5.5V7.8Z" fill="#737d89"/><circle cx="3.2" cy="2.7" r="1" fill="#737d89"/></svg>
<svg class="a" style="left:537.5px;top:1306px" width="12.5" height="8.5" viewBox="0 0 12.5 8.5"><path d="M0.3 4.2Q6.2 -2.5 12.2 4.2Q6.2 10.9 0.3 4.2Z" fill="none" stroke="#737d89" stroke-width="1.1"/><circle cx="6.2" cy="4.2" r="2.6" fill="#737d89"/><circle cx="5.3" cy="3.3" r=".8" fill="#fff"/></svg>
<svg class="a" style="left:562px;top:1305px" width="11.5" height="9.5" viewBox="0 0 11.5 9.5"><rect x="0.7" y="0.7" width="10" height="8.3" fill="none" stroke="#737d89" stroke-width="1.3"/><path d="M5.7 0.7V9" stroke="#737d89" stroke-width="1.3"/></svg>
<svg class="a" style="left:586px;top:1305px" width="11" height="9.5" viewBox="0 0 11 9.5"><g fill="#737d89"><path d="M0 0H4L2.8 1.2L5.5 3.9L4.4 5L1.2 2.3L0 3.5Z"/><path d="M11 0H7L8.2 1.2L5.5 3.9L6.6 5L9.8 2.3L11 3.5Z"/><path d="M0 9.5H4L2.8 8.3L5.5 5.6L4.4 4.5L1.2 7.2L0 6Z"/><path d="M11 9.5H7L8.2 8.3L5.5 5.6L6.6 4.5L9.8 7.2L11 6Z"/></g></svg>
<svg class="a" style="left:620.8px;top:1304.8px" width="10.5" height="10.5" viewBox="0 0 10.5 10.5"><circle cx="5.25" cy="5.25" r="5" fill="#737d89"/><path d="M3.4 4Q3.4 2.2 5.3 2.2Q7.1 2.2 7.1 3.8Q7.1 4.8 6 5.3Q5.4 5.6 5.4 6.3" fill="none" stroke="#fff" stroke-width="1.3"/><rect x="4.6" y="7.2" width="1.5" height="1.4" fill="#fff"/></svg>
</body></html>
